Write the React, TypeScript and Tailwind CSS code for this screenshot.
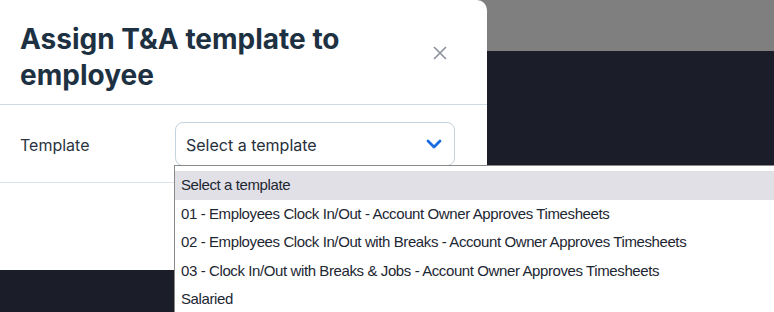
import React from "react";

const options = [
  "Select a template",
  "01 - Employees Clock In/Out - Account Owner Approves Timesheets",
  "02 - Employees Clock In/Out with Breaks - Account Owner Approves Timesheets",
  "03 - Clock In/Out with Breaks & Jobs - Account Owner Approves Timesheets",
  "Salaried",
];

const App = () => {
  return (
    <div className="relative h-[312px] w-[774px] overflow-hidden bg-[#1b1d28] font-['Inter',sans-serif]">
      {/* backdrop top band */}
      <div className="h-[51px] bg-[#7f7f7f]" />

      {/* Modal */}
      <div className="absolute left-0 top-0 flex h-[270px] w-[487px] flex-col rounded-tr-[10px] bg-white">
        <div className="flex h-[105px] items-start justify-between border-b border-[#cddbe4] pl-5 pr-[40px] pt-[21px]">
          <h2 className="w-[360px] text-[28px] font-bold leading-[36px] text-[#1d3142]">
            Assign T&amp;A template to employee
          </h2>
          <button className="mt-[25px] text-[#8a919a]">
            <svg width="14" height="14" viewBox="0 0 14 14" fill="none" stroke="currentColor" strokeWidth="1.6">
              <path d="M1 1l12 12M13 1L1 13" />
            </svg>
          </button>
        </div>

        <div className="flex h-[78px] items-center border-b border-[#dce3e8] pl-5 pr-[32px]">
          <label className="w-[155px] pt-[2px] text-[16px] text-[#2a3541]">Template</label>
          <div className="flex h-[44px] flex-1 items-center justify-between rounded-[8px] border border-[#c3d3df] pl-[10px] pr-[12px]">
            <span className="pt-[2px] text-[16px] text-[#27313c]">Select a template</span>
            <svg width="16" height="10" viewBox="0 0 16 10" fill="none" stroke="#1a6de0" strokeWidth="2.8" strokeLinecap="round" strokeLinejoin="round">
              <path d="M2 2l6 6 6-6" />
            </svg>
          </div>
        </div>
      </div>

      {/* Native-looking dropdown list */}
      <div className="absolute left-[174px] top-[165px] w-[600px] border-l border-t border-[#8a8a8a] bg-white pt-[5px] font-['Liberation_Sans',Arial,sans-serif]">
        {options.map((o, i) => (
          <div
            key={o}
            className={`flex h-[28.5px] items-center whitespace-nowrap pl-[6px] text-[15px] tracking-[-0.4px] text-[#1d2733] ${
              i === 0 ? "bg-[#e1e0e6]" : ""
            }`}
          >
            {o}
          </div>
        ))}
      </div>
    </div>
  );
};

export default App;
